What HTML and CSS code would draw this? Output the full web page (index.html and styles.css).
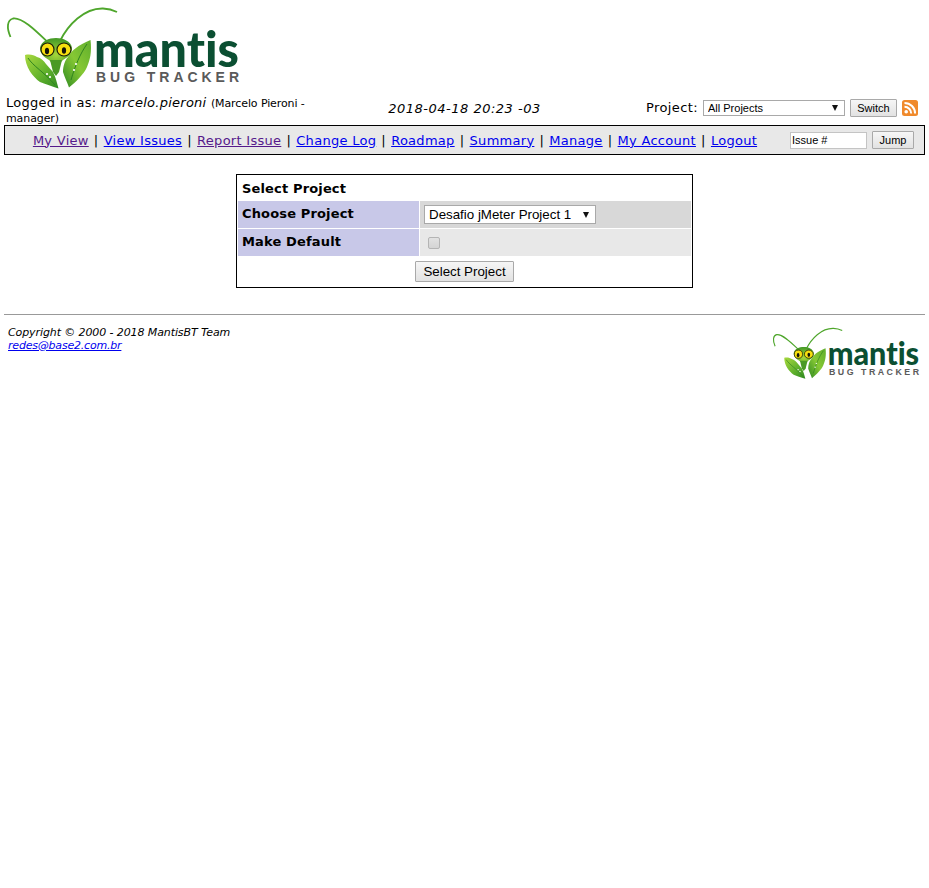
FILE: index.html
```html
<!DOCTYPE html>
<html lang="en">
<head>
<meta charset="utf-8">
<title>MantisBT</title>
<link rel="stylesheet" href="styles.css">
</head>
<body>
<svg class="defs" width="0" height="0" aria-hidden="true">
  <defs>
    <linearGradient id="leaf" x1="0" y1="0" x2="1" y2="1">
      <stop offset="0" stop-color="#a9d93f"/>
      <stop offset="0.55" stop-color="#62b22c"/>
      <stop offset="1" stop-color="#2f8a22"/>
    </linearGradient>
    <linearGradient id="leafr" x1="1" y1="0" x2="0" y2="1">
      <stop offset="0" stop-color="#5fae2c"/>
      <stop offset="0.5" stop-color="#86c834"/>
      <stop offset="1" stop-color="#2f8a22"/>
    </linearGradient>
    <radialGradient id="face" cx="0.5" cy="0.65" r="0.7">
      <stop offset="0" stop-color="#a5d63a"/>
      <stop offset="1" stop-color="#3b9425"/>
    </radialGradient>
    <symbol id="logo" viewBox="4 0 238 92">
      <path d="M10.500 37C6.500 28 7 20 13 18.500C22 17 36 31 47.500 42" fill="none" stroke="#4fa62c" stroke-width="1.800"/>
      <path d="M60 41C68 25 84 8 103 8.500C109 8.700 113 10 117 12" fill="none" stroke="#4fa62c" stroke-width="1.800"/>
      <path d="M25 55C30 54 34 55 37 57C41 58 44 61 46 64L53 72C56 78 57 83 58.500 88.500C51 86 45 84 40 82C33 77 25 67 25 55Z" fill="url(#leaf)"/>
      <path d="M28 58C33 66 44 72 55 85" fill="none" stroke="#2f8320" stroke-width="1"/>
      <path d="M90.500 40C92 52 90 60 87 67C84 74 76 82 69 87.500C67 82 65 78 63 72C63 66 65 60 68 57C71 51 78 45 90.500 40Z" fill="url(#leafr)"/>
      <path d="M87 44C80 54 75 66 71 80" fill="none" stroke="#2f8320" stroke-width="1"/>
      <circle cx="47" cy="74" r="1.100" fill="#fff"/><circle cx="50" cy="77" r="1.100" fill="#fff"/><circle cx="76" cy="64" r="1.100" fill="#fff"/><circle cx="74" cy="70" r="1.100" fill="#fff"/>
      <path d="M40 48C41 41 49 38 56 38C63 38 71 41 72 48C72 55 66 58 63 60L59 64L53 64L49 60C46 58 40 55 40 48Z" fill="url(#face)"/>
      <path d="M50 60L53 72L56 76L59 72L62 60Z" fill="#4a9a25"/>
      <ellipse cx="47.500" cy="49.500" rx="6.500" ry="6.500" fill="#f7df0e" stroke="#1f2008" stroke-width="1.200"/>
      <ellipse cx="64" cy="49.500" rx="7" ry="6.500" fill="#f7df0e" stroke="#1f2008" stroke-width="1.200"/>
      <ellipse cx="47" cy="51" rx="2.100" ry="3.300" fill="#15150a"/>
      <ellipse cx="64" cy="50.500" rx="2.100" ry="3.300" fill="#15150a"/>
      <text class="logo-word" x="94" y="67" textLength="145" lengthAdjust="spacingAndGlyphs">mantis</text>
      <text class="logo-sub" x="96" y="82" textLength="143">BUG TRACKER</text>
    </symbol>
  </defs>
</svg>

<header class="brand">
  <svg class="logo-large" viewBox="0 0 238 92"><use href="#logo" width="238" height="92"/></svg>
</header>

<div class="info-row">
  <div class="who">Logged in as: <em>marcelo.pieroni</em> <small>(Marcelo Pieroni - manager)</small></div>
  <div class="when">2018-04-18 20:23 -03</div>
  <div class="project">
    <label class="project-label">Project:</label>
    <span class="select-wrap select-wrap-sm"><select class="select select-sm"><option>All Projects</option></select></span>
    <button class="btn btn-sm" type="button">Switch</button>
    <svg class="rss" viewBox="0 0 16 16" width="16" height="16">
      <rect width="16" height="16" rx="2.500" fill="#f08a2c"/>
      <circle cx="4.200" cy="11.800" r="1.800" fill="#fff"/>
      <path d="M2.500 6.800A6.700 6.700 0 0 1 9.200 13.500M2.500 2.900A10.600 10.600 0 0 1 13.100 13.500" fill="none" stroke="#fff" stroke-width="2"/>
    </svg>
  </div>
</div>

<nav class="menu">
  <div class="menu-links">
    <a class="seen" href="#">My View</a> | <a href="#">View Issues</a> | <a class="seen" href="#">Report Issue</a> | <a href="#">Change Log</a> | <a href="#">Roadmap</a> | <a href="#">Summary</a> | <a href="#">Manage</a> | <a href="#">My Account</a> | <a href="#">Logout</a>
  </div>
  <div class="jump">
    <input class="issue" type="text" value="Issue #">
    <button class="btn btn-sm btn-jump" type="button">Jump</button>
  </div>
</nav>

<table class="form">
  <colgroup><col class="col-label"><col></colgroup>
  <tr><td class="form-title" colspan="2">Select Project</td></tr>
  <tr>
    <th class="label">Choose Project</th>
    <td class="value value-dark"><span class="select-wrap"><select class="select select-md"><option>Desafio jMeter Project 1</option></select></span></td>
  </tr>
  <tr>
    <th class="label">Make Default</th>
    <td class="value value-light"><input class="check" type="checkbox" disabled></td>
  </tr>
  <tr><td class="actions" colspan="2"><button class="btn btn-md" type="button">Select Project</button></td></tr>
</table>

<hr class="rule">

<footer class="foot">
  <address class="credit">Copyright © 2000 - 2018 MantisBT Team<br><a class="mail" href="#">redes@base2.com.br</a></address>
  <svg class="logo-small" viewBox="0 0 238 92"><use href="#logo" width="238" height="92"/></svg>
</footer>
</body>
</html>
```

FILE: styles.css
```css
* { box-sizing: border-box; }
html, body { background: #fff; }
body {
  margin: 0;
  padding: 0 4px;
  font-family: "DejaVu Sans", Verdana, sans-serif;
  font-size: 13px;
  color: #000;
}
a { color: #00e; }
a.seen { color: #551a8b; }

.defs { position: absolute; }
.logo-word { font-family: "Lato", "Open Sans", sans-serif; font-weight: 900; font-size: 50px; fill: #0b4f32; font-variant-ligatures: none; }
.logo-sub { font-family: "Liberation Sans", sans-serif; font-weight: 700; font-size: 14px; fill: #5a5a5a; }

.brand { height: 96px; }
.logo-large { display: block; width: 238px; height: 92px; }

.info-row {
  display: grid;
  grid-template-columns: 1fr 1fr 1fr;
  align-items: start;
  height: 29px;
  padding: 0 2px;
}
.who { line-height: 14px; letter-spacing: 0.26px; }
.who small { font-size: 11px; letter-spacing: -0.1px; }
.when { text-align: center; font-style: italic; line-height: 14px; padding-top: 6px; letter-spacing: 0.5px; }
.project { display: flex; justify-content: flex-end; align-items: center; height: 24px; gap: 5px; padding-right: 5px; }
.project-label { letter-spacing: 0.4px; margin-bottom: 2px; }

.select-wrap { position: relative; display: inline-block; }
.select-wrap::after {
  content: "";
  position: absolute;
  right: 7px;
  top: 50%;
  margin-top: -3px;
  border-style: solid;
  border-width: 6px 3.500px 0;
  border-color: #111 transparent transparent;
  pointer-events: none;
}
.select {
  display: block;
  appearance: none;
  background: #fff;
  border: 1px solid #a9a9a9;
  border-radius: 0;
  font-family: "Liberation Sans", Arial, sans-serif;
  color: #000;
  margin: 0;
}
.select-sm { width: 142px; height: 16px; font-size: 11px; padding: 0 0 0 4px; }
.select-md { width: 172px; height: 19px; font-size: 13.330px; padding: 0 0 0 4px; }

.btn {
  font-family: "Liberation Sans", Arial, sans-serif;
  color: #000;
  background: linear-gradient(#f6f6f6, #e2e2e2);
  border: 1px solid #a9a9a9;
  border-radius: 1px;
  padding: 0;
  margin: 0;
}
.btn-sm { width: 47px; height: 18px; font-size: 11px; }
.btn-jump { width: 42px; }
.btn-md { width: 99px; height: 21px; font-size: 13.330px; }

.menu {
  display: flex;
  align-items: center;
  height: 30px;
  border: 1px solid #000;
  background: #e8e8e8;
}
.menu-links { flex: 1; text-align: center; white-space: nowrap; letter-spacing: 0.4px; word-spacing: 0.55px; }
.menu-links a { letter-spacing: 0.28px; word-spacing: 0; }
.jump { width: 139px; display: flex; align-items: center; gap: 5px; padding-left: 5px; }
.issue {
  width: 77px;
  height: 17px;
  font-family: "Liberation Sans", Arial, sans-serif;
  font-size: 11px;
  border: 1px solid #c4c4c4;
  background: #fff;
  padding: 0 1px;
  margin: 0;
}

.form {
  width: 457px;
  margin: 19px auto 0;
  border: 1px solid #000;
  border-collapse: separate;
  border-spacing: 1px;
  padding: 0;
  table-layout: fixed;
}
.col-label { width: 181px; }
.form th, .form td { padding: 0; }
.form-title { height: 24px; padding-left: 4px !important; font-weight: 700; letter-spacing: 0.15px; }
.label {
  height: 27px;
  background: #c8c8e8;
  text-align: left;
  padding: 0 0 3px 4px !important;
  font-weight: 700;
  letter-spacing: 0.15px;
}
.value { padding-left: 4px !important; vertical-align: middle; }
.value-dark { background: #d8d8d8; }
.value-light { background: #e8e8e8; }
.check {
  display: block;
  appearance: none;
  width: 12px;
  height: 12px;
  margin: 0 0 0 4px;
  border: 1px solid #b4b4b4;
  border-radius: 2px;
  background: linear-gradient(#e2e2e2, #d4d4d4);
}
.actions { height: 29px; text-align: center; vertical-align: middle; }

.rule {
  height: 1px;
  border: 0;
  margin: 26px 0 0;
  background: #999;
}

.foot {
  display: flex;
  justify-content: space-between;
  align-items: flex-start;
  padding: 8px 4px 0 4px;
}
.credit { font-size: 11px; font-style: italic; line-height: 13px; padding-top: 3px; letter-spacing: -0.1px; }
.mail { letter-spacing: -0.2px; }
.logo-small { display: block; width: 150px; height: 58px; }
```
